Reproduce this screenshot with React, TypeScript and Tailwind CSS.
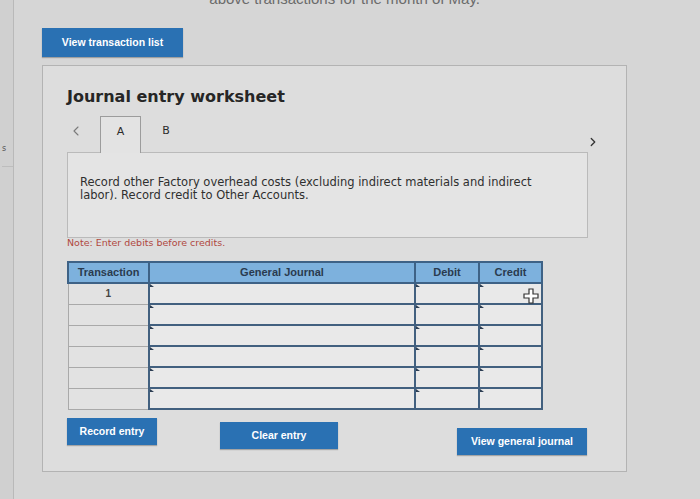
import { ChevronLeft, ChevronRight } from 'lucide-react';

const rows = [0, 1, 2, 3, 4, 5];

function Marker() {
  return (
    <span className="absolute left-0 top-0 h-0 w-0 border-l-[4px] border-t-[3px] border-l-[#2b3d52] border-t-transparent" />
  );
}

function PlusCursor() {
  return (
    <svg width="16" height="16" viewBox="0 0 16 16" className="absolute right-[2px] top-[4px]">
      <path
        d="M6 1h4v5h5v4h-5v5H6v-5H1V6h5z"
        fill="#ffffff"
        stroke="#333333"
        strokeWidth="1.2"
      />
    </svg>
  );
}

function BlueButton({ label, className }: { label: string; className: string }) {
  return (
    <button
      className={`bg-[#2a71b3] text-white text-[10.5px] font-bold font-['Liberation_Sans',Arial,sans-serif] shadow-[0_1px_1px_rgba(0,0,0,0.25)] ${className}`}
    >
      {label}
    </button>
  );
}

export default function App() {
  return (
    <div className="w-[700px] h-[499px] overflow-hidden bg-[#d6d6d6] flex font-['DejaVu_Sans',Verdana,sans-serif] text-[#2b2b2b]">
      <div className="w-[14px] shrink-0 border-r border-[#b9b9b9] bg-[#d0d0d0] pt-[143px] pl-[2px]">
        <div className="h-[24px] border-b border-[#bdbdbd] text-[8px] text-[#555]">s</div>
      </div>

      <div className="flex-1 pl-[28px]">
        {/* tail of the instructions paragraph, scrolled mostly out of view */}
        <div className="h-[6px] w-[438px] flex justify-end">
          <div className="-mt-[9px] shrink-0 whitespace-nowrap text-[15px] leading-[16px] text-[#6b6b6b] font-['Liberation_Sans',Arial,sans-serif]">
            above transactions for the month of May.
          </div>
        </div>

        <BlueButton label="View transaction list" className="mt-[22px] w-[141px] h-[29px]" />

        <div className="mt-[8px] w-[585px] h-[407px] border border-[#b3b3b3] bg-[#dddddd] pl-[24px] pt-[21px]">
          <h1 className="text-[16px] font-bold leading-[20px] text-[#262626]">Journal entry worksheet</h1>

          <div className="mt-[6px] flex items-end w-[535px] h-[39px]">
            <ChevronLeft size={16} strokeWidth={1.6} className="mb-[13px] ml-[1px] text-[#7a7a7a]" />
            <div className="ml-[16px] w-[41px] h-[37px] border border-b-0 border-[#9c9c9c] bg-[#e3e3e3] text-[11px] text-center pt-[7px] relative z-10 -mb-px">
              A
            </div>
            <div className="w-[50px] text-center text-[11px] mb-[13px]">B</div>
            <div className="flex-1" />
            <ChevronRight size={14} strokeWidth={2.2} className="mb-[3px] mr-[2px] text-[#333]" />
          </div>

          <div className="w-[521px] h-[86px] border border-[#bababa] bg-[#e4e4e4] pl-[12px] pt-[23px] text-[11.5px] leading-[13px] text-[#2f2f2f]">
            Record other Factory overhead costs (excluding indirect materials and indirect
            <br />
            labor). Record credit to Other Accounts.
          </div>

          <p className="mt-[-1px] text-[9.5px] leading-[12px] text-[#b0483f]">Note: Enter debits before credits.</p>

          <table className="mt-[12px] border-collapse font-['Liberation_Sans',Arial,sans-serif] text-[10px]">
            <thead>
              <tr className="h-[21px] bg-[#7db1dd] text-[#2a3b4f] text-[11px]">
                <th className="w-[81px] border-2 border-[#3e6286] font-bold">Transaction</th>
                <th className="w-[266px] border-2 border-[#3e6286] font-bold">General Journal</th>
                <th className="w-[64px] border-2 border-[#3e6286] font-bold">Debit</th>
                <th className="w-[63px] border-2 border-[#3e6286] font-bold">Credit</th>
              </tr>
            </thead>
            <tbody>
              {rows.map((r) => (
                <tr key={r} className="h-[21px]">
                  <td className="border border-[#a9a9a9] bg-[#e2e2e2] text-center font-bold text-[#444]">
                    {r === 0 ? '1' : ''}
                  </td>
                  <td className="relative border-2 border-[#42607f] bg-[#e9e9e9]">
                    <Marker />
                  </td>
                  <td className="relative border-2 border-[#42607f] bg-[#e9e9e9]">
                    <Marker />
                  </td>
                  <td className="relative border-2 border-[#42607f] bg-[#e9e9e9]">
                    <Marker />
                    {r === 0 && <PlusCursor />}
                  </td>
                </tr>
              ))}
            </tbody>
          </table>

          <div className="mt-[8px] flex items-start">
            <BlueButton label="Record entry" className="w-[90px] h-[27px]" />
            <BlueButton label="Clear entry" className="ml-[63px] mt-[4px] w-[118px] h-[27px]" />
            <BlueButton label="View general journal" className="ml-[119px] mt-[10px] w-[130px] h-[27px]" />
          </div>
        </div>
      </div>
    </div>
  );
}
